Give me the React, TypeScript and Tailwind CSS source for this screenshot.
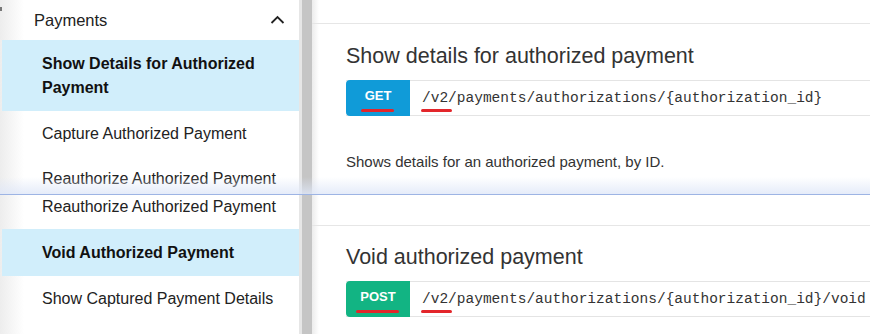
const SANS = "font-['Liberation_Sans',Arial,sans-serif]";
const MONO = "font-['Liberation_Mono','Courier_New',monospace]";

type Item = { label: string; active?: boolean; h: string };

const TOP_ITEMS: Item[] = [
  { label: "Show Details for Authorized Payment", active: true, h: "h-[71px]" },
  { label: "Capture Authorized Payment", h: "h-[45px]" },
  { label: "Reauthorize Authorized Payment", h: "h-[45px]" },
];

const BOTTOM_ITEMS: Item[] = [
  { label: "Reauthorize Authorized Payment", h: "h-[45px]" },
  { label: "Void Authorized Payment", active: true, h: "h-[47px]" },
  { label: "Show Captured Payment Details", h: "h-[46px]" },
];

const NavItem = ({ label, active, h }: Item) => (
  <div
    className={`ml-[2px] flex ${h} items-center pl-[40px] pr-4 text-[16px] leading-[24px] ${
      active ? "bg-[#d1eefb] font-bold text-[#111]" : "whitespace-nowrap text-[#222]"
    }`}
  >
    <span className={active ? "max-w-[232px]" : ""}>{label}</span>
  </div>
);

const Endpoint = ({ method, path, badge }: { method: string; path: string; badge: string }) => (
  <div className="flex h-[36px] items-stretch border-y border-[#e4e4e4]">
    <div className={`-my-px flex w-[64px] items-center justify-center rounded-l-[4px] pb-[4px] ${badge}`}>
      <span className="relative text-[13px] font-semibold leading-[16px] text-white">
        {method}
        <span className="absolute -left-[4px] -right-[3px] top-[21px] h-[3px] rounded-full bg-[#e3262b]" />
      </span>
    </div>
    <span className={`relative ml-[12px] self-center whitespace-nowrap text-[14.5px] leading-[20px] text-[#333] ${MONO}`}>
      {path}
      <span className="absolute -left-[1px] top-[21px] h-[3px] w-[31px] rounded-full bg-[#e3262b]" />
    </span>
  </div>
);

const Rails = () => (
  <>
    <div className="w-[3px] shrink-0 bg-[#e6e6e6]" />
    <div className="w-[10px] shrink-0 bg-[#c5c5c5]" />
  </>
);

export default function App() {
  return (
    <div className={`w-[870px] overflow-hidden bg-white ${SANS}`}>
      {/* upper capture */}
      <div className="relative flex h-[195px] overflow-hidden">
        <aside className="w-[299px] shrink-0 bg-[linear-gradient(to_right,#ededed,#fff_24px)]">
          <div className="flex h-[40px] items-center justify-between pl-[34px] pr-[14px]">
            <span className="text-[16.5px] text-[#222]">Payments</span>
            <svg width="15" height="10" viewBox="0 0 15 10" fill="none">
              <path d="M1.5 8 L7.5 2 L13.5 8" stroke="#222" strokeWidth="1.8" />
            </svg>
          </div>
          {TOP_ITEMS.map((it) => (
            <NavItem key={it.label} {...it} />
          ))}
        </aside>
        <Rails />
        <main className="flex-1 bg-[linear-gradient(to_right,#ececec,#fff_7px)] pt-[23px]">
          <section className="border-t border-[#e6e6e6] pl-[34px] pt-[18px]">
            <h2 className="text-[21.5px] leading-[28px] text-[#333]">Show details for authorized payment</h2>
            <div className="mt-[10px]">
              <Endpoint method="GET" path="/v2/payments/authorizations/{authorization_id}" badge="bg-[#109bd8]" />
            </div>
            <p className="mt-[35px] text-[15px] leading-[22px] text-[#333]">
              Shows details for an authorized payment, by ID.
            </p>
          </section>
        </main>
        <div className="absolute left-0 top-[7px] h-[4px] w-[2px] bg-[#777]" />
        <div className="absolute inset-x-0 bottom-0 h-[18px] border-b border-[#9db4e4] bg-gradient-to-b from-[#ffffff00] to-[#dfe7f8cc]" />
      </div>

      {/* lower capture */}
      <div className="flex h-[139px] overflow-hidden">
        <aside className="w-[299px] shrink-0 bg-[linear-gradient(to_right,#ededed,#fff_24px)]">
          <div className="-mt-[11px]">
            {BOTTOM_ITEMS.map((it) => (
              <NavItem key={it.label} {...it} />
            ))}
          </div>
        </aside>
        <Rails />
        <main className="flex-1 bg-[linear-gradient(to_right,#ececec,#fff_7px)] pt-[30px]">
          <section className="border-t border-[#e6e6e6] pl-[34px] pt-[17px]">
            <h2 className="text-[21.5px] leading-[28px] text-[#333]">Void authorized payment</h2>
            <div className="mt-[10px]">
              <Endpoint method="POST" path="/v2/payments/authorizations/{authorization_id}/void" badge="bg-[#12b483]" />
            </div>
          </section>
        </main>
      </div>
    </div>
  );
}
